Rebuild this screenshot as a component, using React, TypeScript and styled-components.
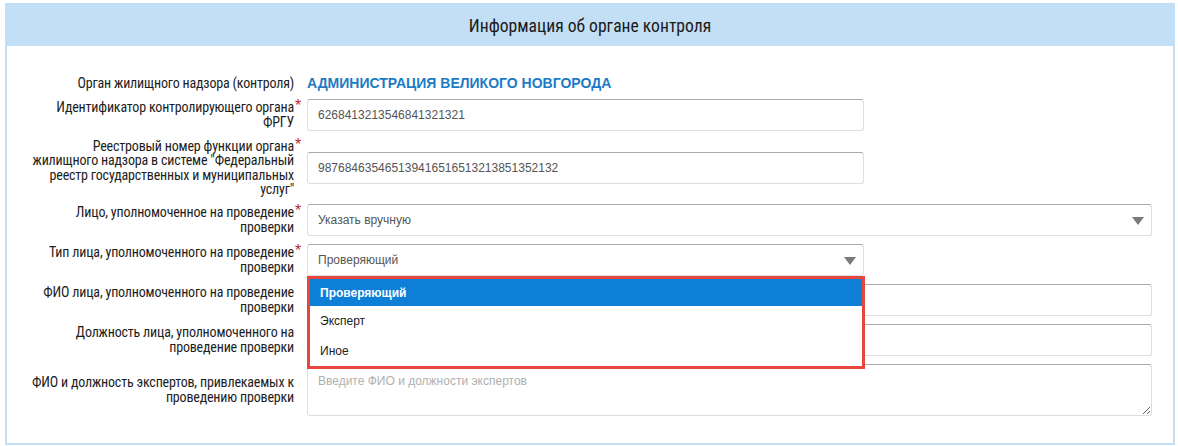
import React from 'react';
import styled, { createGlobalStyle } from 'styled-components';

const GlobalStyle = createGlobalStyle`
  body {
    margin: 0;
    background: #fff;
    font-family: "Liberation Sans", Arial, sans-serif;
  }
`;

const Page = styled.div`
  padding: 3px 3px 0 5px;
`;

const Panel = styled.section`
  border: 2px solid #c2dff5;
  background: #fff;
`;

const Header = styled.header`
  height: 41px;
  background: #c2dff5;
  display: flex;
  align-items: center;
  justify-content: center;
  font-family: "Roboto Condensed", "Roboto", sans-serif;
  font-size: 17.6px;
  color: #1a1a1a;
`;

const Form = styled.div`
  display: flex;
  flex-direction: column;
  gap: 8px;
  padding: 30px 21px 27px 0;
`;

const Row = styled.div<{ $raised?: boolean }>`
  display: grid;
  grid-template-columns: 287px 1fr;
  column-gap: 13px;
  align-items: center;
  position: relative;
  z-index: ${(p) => (p.$raised ? 2 : 'auto')};
`;

const Label = styled.div<{ $dense?: boolean }>`
  justify-self: end;
  text-align: right;
  white-space: nowrap;
  font-family: "Roboto Condensed", "Roboto", sans-serif;
  font-size: 14px;
  letter-spacing: -0.18px;
  line-height: ${(p) => (p.$dense ? '14.25px' : '15px')};
  color: #1d1d1d;
  position: relative;
`;

const Required = styled.span`
  position: absolute;
  left: 100%;
  top: -2px;
  margin-left: 1px;
  color: #c2282c;
  font-family: "Liberation Sans", Arial, sans-serif;
  font-size: 16px;
  line-height: 15px;
`;

const Value = styled.div`
  font-size: 14px;
  font-weight: bold;
  color: #1c7bc4;
  line-height: 15px;
`;

const Field = styled.div<{ $half?: boolean }>`
  position: relative;
  width: ${(p) => (p.$half ? '557px' : '100%')};
`;

const Input = styled.input`
  box-sizing: border-box;
  width: 100%;
  height: 32px;
  padding: 0 10px;
  border: 1px solid #dedede;
  border-top-color: #a9a9a9;
  border-radius: 3px;
  font-family: "Liberation Sans", Arial, sans-serif;
  font-size: 12px;
  color: #555;
  background: #fff;
  outline: none;
`;

const SelectBox = styled.div`
  box-sizing: border-box;
  height: 32px;
  padding: 0 30px 0 10px;
  border: 1px solid #dedede;
  border-top-color: #a9a9a9;
  border-radius: 3px;
  display: flex;
  align-items: center;
  font-size: 12px;
  color: #555;
  position: relative;
`;

const Caret = styled.span`
  position: absolute;
  right: 7px;
  top: 12px;
  width: 0;
  height: 0;
  border-left: 6px solid transparent;
  border-right: 6px solid transparent;
  border-top: 8px solid #7a7a7a;
`;

const TextArea = styled.textarea`
  box-sizing: border-box;
  display: block;
  width: 100%;
  height: 52px;
  padding: 9px 10px;
  border: 1px solid #dedede;
  border-top-color: #a9a9a9;
  border-radius: 3px;
  font-family: "Liberation Sans", Arial, sans-serif;
  font-size: 12px;
  color: #555;
  outline: none;
  resize: vertical;

  &::placeholder {
    color: #b0b0b0;
  }
`;

const Dropdown = styled.ul`
  position: absolute;
  left: 0;
  top: 100%;
  margin: 0;
  padding: 0;
  list-style: none;
  width: 558px;
  box-sizing: border-box;
  border: 3px solid #e6463c;
  background: #fff;
  z-index: 5;
`;

const Option = styled.li<{ $active?: boolean }>`
  height: ${(p) => (p.$active ? '27px' : '30px')};
  padding: 0 10px;
  display: flex;
  align-items: center;
  font-size: 12px;
  font-weight: ${(p) => (p.$active ? 'bold' : 'normal')};
  color: ${(p) => (p.$active ? '#fff' : '#222')};
  background: ${(p) => (p.$active ? '#0e7fd6' : '#fff')};
`;

const options = ['Проверяющий', 'Эксперт', 'Иное'];

export default function App() {
  return (
    <Page>
      <GlobalStyle />
      <Panel>
        <Header>Информация об органе контроля</Header>
        <Form>
          <Row>
            <Label>Орган жилищного надзора (контроля)</Label>
            <Value>АДМИНИСТРАЦИЯ ВЕЛИКОГО НОВГОРОДА</Value>
          </Row>

          <Row>
            <Label>
              Идентификатор контролирующего органа<Required>*</Required>
              <br />
              ФРГУ
            </Label>
            <Field $half>
              <Input readOnly value="6268413213546841321321" />
            </Field>
          </Row>

          <Row>
            <Label $dense>
              Реестровый номер функции органа<Required>*</Required>
              <br />
              жилищного надзора в системе "Федеральный
              <br />
              реестр государственных и муниципальных
              <br />
              услуг"
            </Label>
            <Field $half>
              <Input readOnly value="987684635465139416516513213851352132" />
            </Field>
          </Row>

          <Row>
            <Label>
              Лицо, уполномоченное на проведение<Required>*</Required>
              <br />
              проверки
            </Label>
            <Field>
              <SelectBox>
                Указать вручную
                <Caret />
              </SelectBox>
            </Field>
          </Row>

          <Row $raised>
            <Label>
              Тип лица, уполномоченного на проведение<Required>*</Required>
              <br />
              проверки
            </Label>
            <Field $half>
              <SelectBox>
                Проверяющий
                <Caret />
              </SelectBox>
              <Dropdown>
                {options.map((o, i) => (
                  <Option key={o} $active={i === 0}>
                    {o}
                  </Option>
                ))}
              </Dropdown>
            </Field>
          </Row>

          <Row>
            <Label>
              ФИО лица, уполномоченного на проведение
              <br />
              проверки
            </Label>
            <Field>
              <Input readOnly value="" />
            </Field>
          </Row>

          <Row>
            <Label>
              Должность лица, уполномоченного на
              <br />
              проведение проверки
            </Label>
            <Field>
              <Input readOnly value="" />
            </Field>
          </Row>

          <Row>
            <Label>
              ФИО и должность экспертов, привлекаемых к
              <br />
              проведению проверки
            </Label>
            <Field>
              <TextArea placeholder="Введите ФИО и должности экспертов" />
            </Field>
          </Row>
        </Form>
      </Panel>
    </Page>
  );
}
